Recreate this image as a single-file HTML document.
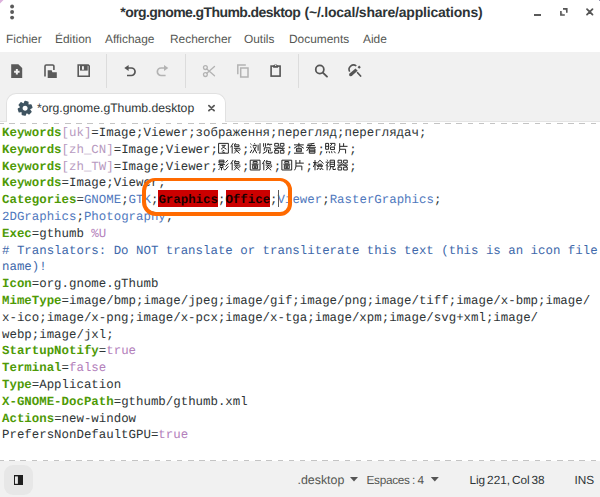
<!DOCTYPE html>
<html><head><meta charset="utf-8">
<style>
*{margin:0;padding:0;box-sizing:border-box}
html,body{width:600px;height:497px;overflow:hidden;background:#fff;position:relative}
body{font-family:"Liberation Sans",sans-serif;color:#2e3436;text-rendering:geometricPrecision}
.abs{position:absolute;white-space:pre}
#title,#title2{top:3px;font-size:14px;font-weight:bold;color:#2e3436;line-height:18px}
.menu{top:32px;font-size:11.9px;color:#555753;line-height:14px}
#toolbar{position:absolute;left:0;top:52px;width:600px;height:70px;background:#f1f1f1}
.sep{position:absolute;top:2.3px;width:1px;height:33.3px;background:#dcdcdc}
#tab{position:absolute;left:6px;top:93px;width:220px;height:29px;background:#fff;border:1px solid #e1e1e1;border-bottom:none;border-radius:10px 10px 0 0}
#tabtext{left:37px;top:101px;font-size:12.2px;color:#2e3436;line-height:15px}
.dash{position:absolute;left:-1.68px;width:602px;height:1px;background:repeating-linear-gradient(90deg,#c4c4c4 0 5.5px,transparent 5.5px 11.18px)}
#editor{position:absolute;left:2px;top:125.1px;font-family:"Liberation Mono",monospace;font-size:12.41px;line-height:16.8px;color:#2e3436;white-space:pre}
.k{color:#4e9a06;font-weight:bold}
.l{color:#b79ac0}
.v{color:#4f78bd}
.c{color:#4068aa}
.b{color:#b380bb}
.hl{color:#1a0000;font-weight:bold}
.hlbox{position:absolute;background:#cc0000}
#status{position:absolute;left:0;top:461px;width:600px;height:36px;background:#f1f1f1}
.st{top:473px;font-size:11.8px;color:#555753;line-height:14px}
.cj{display:inline-block;height:0}
</style></head><body>
<!-- corner -->
<div class="abs" style="left:0;top:0;width:3.5px;height:3.5px;background:#dcb0dc;clip-path:polygon(0 0,100% 0,0 100%)"></div>
<div class="abs" style="left:599px;top:0;width:1px;height:1px;background:#9896b4"></div>
<!-- kebab -->
<svg class="abs" style="left:0;top:0" width="24" height="24" viewBox="0 0 24 24"><circle cx="12.1" cy="6.45" r="1.95" fill="#5a5a5a"/><circle cx="12.1" cy="12.05" r="1.95" fill="#5a5a5a"/><circle cx="12.1" cy="17.6" r="1.95" fill="#5a5a5a"/></svg>
<div id="title" class="abs" style="left:120.3px;letter-spacing:-0.58px">*org.gnome.gThumb.desktop</div>
<div id="title2" class="abs" style="left:304.5px;letter-spacing:-0.21px">(~/.local/share/applications)</div>
<!-- window controls -->
<div class="abs" style="left:534px;top:14px;width:7px;height:1.6px;background:#5a5a5a"></div>
<svg class="abs" style="left:555px;top:3px" width="20" height="18" viewBox="555 3 20 18"><path d="M563 8.9H566.8V12.8M560.9 11.1V15H564.8" fill="none" stroke="#555" stroke-width="1.6"/><path d="M565 9.6H566V10.6ZM561.7 12.5V13.5H562.7Z" fill="#555"/></svg>
<svg class="abs" style="left:580px;top:3px" width="20" height="18" viewBox="580 3 20 18"><path d="M587 9.1L592.5 14.6M592.5 9.1L587 14.6" stroke="#555" stroke-width="1.8" stroke-linecap="round"/></svg>
<div class="abs menu" style="left:6px">Fichier</div>
<div class="abs menu" style="left:55px">Édition</div>
<div class="abs menu" style="left:105px">Affichage</div>
<div class="abs menu" style="left:170px">Rechercher</div>
<div class="abs menu" style="left:244px">Outils</div>
<div class="abs menu" style="left:289px">Documents</div>
<div class="abs menu" style="left:363px">Aide</div>

<div id="toolbar">
  <div class="sep" style="left:106px"></div>
  <div class="sep" style="left:185px"></div>
  <div class="sep" style="left:298px"></div>
</div>

<svg class="abs" style="left:0;top:52px" width="600" height="40" viewBox="0 52 600 40">
 <!-- new doc -->
 <path d="M11.2 64.3H18.3L22.2 68.1V77.9H11.2Z" fill="#5a5a5a"/>
 <path d="M16.85 69V74.4M14.1 71.7H19.6" stroke="#f2f2f2" stroke-width="2"/>
 <!-- open -->
 <path d="M45 76.4V66.2A1.2 1.2 0 0 1 46.2 65H52.7A1.2 1.2 0 0 1 53.9 66.2V70" fill="none" stroke="#5a5a5a" stroke-width="1.6"/>
 <path d="M47.7 70.2H51.7L52.4 72.2H56.8V77.9H47.7Z" fill="#5a5a5a"/>
 <!-- save -->
 <path d="M78.2 65H88.2L89.2 66V76.2H78.2Z" fill="none" stroke="#5a5a5a" stroke-width="1.6"/>
 <path d="M80 65H87.7V70.6H80Z" fill="#5a5a5a"/>
 <rect x="82" y="66.2" width="1.9" height="3.5" fill="#f2f2f2"/>
 <!-- undo -->
 <path d="M127.6 68H131.3A3.75 3.75 0 0 1 131.3 75.5H127" fill="none" stroke="#555" stroke-width="1.7"/>
 <path d="M124.3 68L128.6 65.1V70.9Z" fill="#555"/>
 <!-- redo -->
 <path d="M164.8 68H161.1A3.75 3.75 0 0 0 161.1 75.5H165.6" fill="none" stroke="#b3b3b3" stroke-width="1.7"/>
 <path d="M168.3 68L164 65.1V70.9Z" fill="#b3b3b3"/>
 <!-- cut -->
 <circle cx="205.4" cy="67.6" r="1.9" fill="none" stroke="#b3b3b3" stroke-width="1.3"/>
 <circle cx="205.4" cy="74.6" r="1.9" fill="none" stroke="#b3b3b3" stroke-width="1.3"/>
 <path d="M206.8 69L214.5 75.8M206.8 73.2L214.5 66.5" stroke="#b3b3b3" stroke-width="1.3" stroke-linecap="round"/>
 <!-- copy -->
 <path d="M237.8 74.3V65H245.8" fill="none" stroke="#b3b3b3" stroke-width="1.5"/>
 <rect x="240.7" y="68" width="7.3" height="9" fill="none" stroke="#b3b3b3" stroke-width="1.5"/>
 <!-- paste -->
 <rect x="271.1" y="66.1" width="9" height="10" fill="none" stroke="#555" stroke-width="1.6"/>
 <path d="M273.1 67.8V65.5H274A1.65 1.65 0 0 1 277.2 65.5H278.1V67.8Z" fill="#555"/><circle cx="275.6" cy="65.2" r="0.75" fill="#f1f1f1"/>
 <!-- search -->
 <circle cx="319.8" cy="69.5" r="4.05" fill="none" stroke="#555" stroke-width="1.75"/>
 <path d="M322.8 72.6L327 76.6" stroke="#555" stroke-width="1.9" stroke-linecap="round"/>
 <!-- replace -->
 <path d="M349.7 71.6A4.4 4.4 0 0 1 356.3 66" fill="none" stroke="#555" stroke-width="1.6"/>
 <path d="M350.6 74.8L356.6 69.6" stroke="#555" stroke-width="3.2"/>
 <circle cx="350.7" cy="74.7" r="1.6" fill="#555"/>
 <path d="M359.2 65.6L360.8 67.2L359.2 68.8L357.6 67.2Z" fill="#555"/>
 <path d="M357.6 72.7L360.6 76" stroke="#555" stroke-width="1.7" stroke-linecap="round"/>
</svg>
<div class="abs" style="left:0;top:121px;width:600px;height:1px;background:#e4e4e4"></div>
<div id="tab"></div>

<svg class="abs" style="left:16px;top:99px" width="20" height="20" viewBox="16 99 20 20"><path fill="#3f5461" stroke="#3f5461" stroke-width="1.6" stroke-linejoin="round" fill-rule="evenodd" d="M24.30 103.77 L25.10 101.60 L27.83 102.18 L27.67 104.49 L28.62 105.34 L30.90 104.95 L31.76 107.60 L29.69 108.62 L29.42 109.87 L30.90 111.65 L29.04 113.72 L27.12 112.43 L25.90 112.83 L25.10 115.00 L22.37 114.42 L22.53 112.11 L21.58 111.26 L19.30 111.65 L18.44 109.00 L20.51 107.98 L20.78 106.73 L19.30 104.95 L21.16 102.88 L23.08 104.17Z M25.10 105.00A3.3 3.3 0 1 0 25.10 111.60A3.3 3.3 0 1 0 25.10 105.00Z"/></svg>
<svg class="abs" style="left:204px;top:101px" width="14" height="14" viewBox="204 101 14 14"><path d="M208.9 105.6L214.1 110.6M214.1 105.6L208.9 110.6" stroke="#5a5a5a" stroke-width="1.8" stroke-linecap="round"/></svg>
<div id="tabtext" class="abs">*org.gnome.gThumb.desktop</div>
<div class="dash" style="top:123px"></div>


<div class="hlbox" style="left:158.4px;top:190.3px;width:59.6px;height:16.8px"></div>
<div class="hlbox" style="left:225.5px;top:190.3px;width:44.7px;height:16.8px"></div>
<div id="editor"><span class="k">Keywords</span><span class="l">[uk]</span>=Image;Viewer;зображення;перегляд;переглядач;
<span class="k">Keywords</span><span class="l">[zh_CN]</span>=Image;Viewer;<span class="cj" style="width:24.2px"></span>;<span class="cj" style="width:36.3px"></span>;<span class="cj" style="width:24.2px"></span>;<span class="cj" style="width:24.2px"></span>;
<span class="k">Keywords</span><span class="l">[zh_TW]</span>=Image;Viewer;<span class="cj" style="width:24.2px"></span>;<span class="cj" style="width:24.2px"></span>;<span class="cj" style="width:24.2px"></span>;<span class="cj" style="width:36.3px"></span>;
<span class="k">Keywords</span>=Image;Viewer;
<span class="k">Categories</span>=<span class="v">GNOME</span>;<span class="v">GTK</span>;<span class="hl">Graphics</span>;<span class="hl">Office</span>;<span class="v">Viewer</span>;<span class="v">RasterGraphics</span>;
<span class="v">2DGraphics</span>;<span class="v">Photography</span>;
<span class="k">Exec</span>=gthumb <span class="b">%U</span>
<span class="c"># Translators: Do NOT translate or transliterate this text (this is an icon file</span>
<span class="c">name)!</span>
<span class="k">Icon</span>=org.gnome.gThumb
<span class="k">MimeType</span>=image/bmp;image/jpeg;image/gif;image/png;image/tiff;image/x-bmp;image/
x-ico;image/x-png;image/x-pcx;image/x-tga;image/xpm;image/svg+xml;image/
webp;image/jxl;
<span class="k">StartupNotify</span>=<span class="b">true</span>
<span class="k">Terminal</span>=<span class="b">false</span>
<span class="k">Type</span>=Application
<span class="k">X-GNOME-DocPath</span>=gthumb/gthumb.xml
<span class="k">Actions</span>=new-window
PrefersNonDefaultGPU=<span class="b">true</span></div>



<!--cjk--><svg class="abs" style="left:0;top:0" width="600" height="200" viewBox="0 0 600 200"><g fill="none" stroke="#222" stroke-width="1">
<path transform="translate(218.10 142.90) scale(0.98)" d="M0.5 0.5H10.5V10.5H0.5Z M3.5 2.5H7.5L3 6.5 M4.5 3.8L8.5 6.5 M4.5 7.3L6.3 8 M3.8 9L6.8 10"/>
<path transform="translate(230.20 142.90) scale(0.98)" d="M3 0.3L0.5 4.5 M2 3V10.8 M5.5 0.3L4.3 2 M4.5 2H9V3.8H4.5Z M3.8 5.5H10.3 M7.3 5.5L4.5 8 M5.5 7L9.5 10.8 M7.8 6.8L4 10.8 M8.3 8L10.5 6.8"/>
<path transform="translate(249.75 142.90) scale(0.98)" d="M0.6 0.8L1.8 1.8 M0.4 3.8L1.6 4.8 M0.4 10.3L2.2 7 M4.8 0.3L5.3 1.5 M3 2.5H7.2 M3.5 3.5L7.2 10.5 M6.7 3.5L2.8 10.5 M8.5 1.8V8 M10.5 0.3V10.5L9.3 10"/>
<path transform="translate(261.85 142.90) scale(0.98)" d="M1.8 0.3V4 M3.8 0.3V4 M6.5 0.3L5.5 2.5 M5.8 1.5H10.5 M8 2.5L9 3.5 M2.5 8V5H8.5V8.5 M5.3 6L4.8 8.8L1 10.8 M6.8 7V10.3H10.5V9"/>
<path transform="translate(273.95 142.90) scale(0.98)" d="M0.8 0.5H4.5V3.3H0.8Z M6.5 0.5H10.2V3.3H6.5Z M0.8 7.6H4.5V10.5H0.8Z M6.5 7.6H10.2V10.5H6.5Z M0 5.5H11 M5.5 3.8L1 7.3 M5.5 4.5L10 7.3 M8.2 3.9L9.2 4.6"/>
<path transform="translate(293.50 142.90) scale(0.98)" d="M0.5 2H10.5 M5.5 0V5 M5 2.5L0.5 5.5 M6 2.5L10.5 5.5 M3 5.6H8V9H3Z M3 7.3H8 M0.5 10.5H10.5"/>
<path transform="translate(305.60 142.90) scale(0.98)" d="M9 0.4L2 1.4 M1.5 2.6H9.5 M0.5 4.5H10.5 M6 1.5L1 8.3 M3.8 6H9.5V10.5H3.8Z M3.8 7.5H9.5 M3.8 9H9.5"/>
<path transform="translate(325.15 142.90) scale(0.98)" d="M0.5 0.5H3.5V6.5H0.5Z M0.5 3.5H3.5 M5 0.5H10V3L9 3.5 M7 1L5 3.5 M5.5 4.3H9.5V6.8H5.5Z M1.3 10.5L1.8 8.5 M4 8.5L4.5 10.5 M6.5 8.5L7 10.5 M9 8.5L10.5 10.5"/>
<path transform="translate(337.25 142.90) scale(0.98)" d="M2.5 0.3V6.5Q2.4 9 1 10.8 M6.5 0.3V3.5 M2.5 3.5H10.5 M2.5 6.5H8.5V10.8"/>
<path transform="translate(218.10 159.70) scale(0.98)" d="M1 0.5H6V3.5H1Z M1 2H6 M0 5H7 M2 6H5V8H2Z M3.5 8V10.8 M1.5 9L0.5 10.5 M5.5 9L6.5 10.5 M10 0.5L7.5 3 M10.5 3.8L7.5 7 M10.5 6.8L7 10.8"/>
<path transform="translate(230.20 159.70) scale(0.98)" d="M3 0.3L0.5 4.5 M2 3V10.8 M5.5 0.3L4.3 2 M4.5 2H9V3.8H4.5Z M3.8 5.5H10.3 M7.3 5.5L4.5 8 M5.5 7L9.5 10.8 M7.8 6.8L4 10.8 M8.3 8L10.5 6.8"/>
<path transform="translate(249.75 159.70) scale(0.98)" d="M0.5 0.5H10.5V10.5H0.5Z M3.5 1.8H7.5V3.5H3.5Z M2 4.6H9 M3 5.6H8V9.2H3Z M4.5 6.7H6.5V8.1H4.5Z"/>
<path transform="translate(261.85 159.70) scale(0.98)" d="M3 0.3L0.5 4.5 M2 3V10.8 M5.5 0.3L4.3 2 M4.5 2H9V3.8H4.5Z M3.8 5.5H10.3 M7.3 5.5L4.5 8 M5.5 7L9.5 10.8 M7.8 6.8L4 10.8 M8.3 8L10.5 6.8"/>
<path transform="translate(281.40 159.70) scale(0.98)" d="M0.5 0.5H10.5V10.5H0.5Z M3.5 1.8H7.5V3.5H3.5Z M2 4.6H9 M3 5.6H8V9.2H3Z M4.5 6.7H6.5V8.1H4.5Z"/>
<path transform="translate(293.50 159.70) scale(0.98)" d="M2.5 0.3V6.5Q2.4 9 1 10.8 M6.5 0.3V3.5 M2.5 3.5H10.5 M2.5 6.5H8.5V10.8"/>
<path transform="translate(313.05 159.70) scale(0.98)" d="M0 3H3.8 M2 0.3V10.8 M2 3.5L0.3 7.5 M2.3 4L3.8 6 M7 0.5L4 4 M7 0.5L10.7 4 M5 4.6H9 M4.5 5.6H6.5V7H4.5Z M7.5 5.6H9.5V7H7.5Z M5.5 8L4 10.5 M5.5 8.5L7 10 M8.5 8L7.5 10.5 M8.5 8.5L10.5 10.5"/>
<path transform="translate(325.15 159.70) scale(0.98)" d="M2 0L2.5 1 M0.5 2.5H3.5L1 6 M2 5V10.8 M2.5 6L3.5 7 M5 0.5H9.5V7H5Z M5 2.6H9.5 M5 4.7H9.5 M6 7L4.5 10.8 M8 7V10H10.5V9"/>
<path transform="translate(337.25 159.70) scale(0.98)" d="M0.8 0.5H4.5V3.3H0.8Z M6.5 0.5H10.2V3.3H6.5Z M0.8 7.6H4.5V10.5H0.8Z M6.5 7.6H10.2V10.5H6.5Z M0 5.5H11 M5.5 3.8L1 7.3 M5.5 4.5L10 7.3 M8.2 3.9L9.2 4.6"/>
</g></svg><!--/cjk-->
<div class="abs" style="left:277.5px;top:190px;width:1.2px;height:16.5px;background:#5a5a5a"></div>
<div class="abs" style="left:142px;top:178px;width:150px;height:38.3px;border:4.1px solid #ff6a00;border-top-width:3.7px;border-radius:13px 12px 12px 14px"></div>
<div class="dash" style="top:460px"></div>
<div id="status"></div>
<div class="abs" style="left:4px;top:465px;width:29px;height:30px;border-radius:9px;background:#e7e7e7"></div>
<svg class="abs" style="left:0;top:460px" width="40" height="37" viewBox="0 460 40 37"><rect x="14" y="475" width="9" height="10" fill="#1e1e1e"/><rect x="15" y="476.4" width="2.9" height="7.4" fill="#e9e9e9"/></svg>
<svg class="abs" style="left:340px;top:470px" width="110" height="20" viewBox="340 470 110 20"><path d="M350 477H358L354 481.5Z" fill="#555"/><path d="M430.8 477H438.8L434.8 481.5Z" fill="#555"/></svg>
<div class="abs st" style="left:297.5px;font-size:12.4px">.desktop</div>
<div class="abs st" style="left:366.5px;word-spacing:-0.5px;letter-spacing:-0.3px">Espaces : 4</div>
<div class="abs st" style="left:469.5px;color:#2e3436;word-spacing:-1.2px;letter-spacing:-0.05px">Lig 221, Col 38</div>
<div class="abs st" style="left:574.5px;color:#2e3436">INS</div>
</body></html>
